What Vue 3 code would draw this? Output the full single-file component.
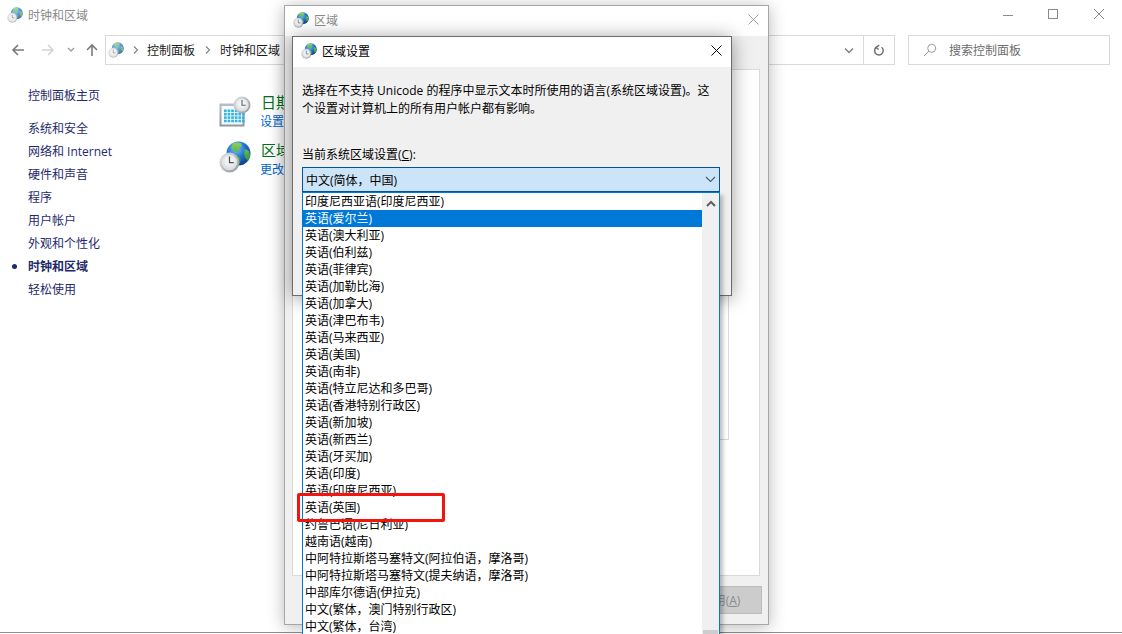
<script setup>
const sideItems = [
  { label: '系统和安全' },
  { label: '网络和 Internet' },
  { label: '硬件和声音' },
  { label: '程序' },
  { label: '用户帐户' },
  { label: '外观和个性化' },
  { label: '时钟和区域', active: true },
  { label: '轻松使用' }
]
const locales = [
  '印度尼西亚语(印度尼西亚)', '英语(爱尔兰)', '英语(澳大利亚)', '英语(伯利兹)', '英语(菲律宾)',
  '英语(加勒比海)', '英语(加拿大)', '英语(津巴布韦)', '英语(马来西亚)', '英语(美国)', '英语(南非)',
  '英语(特立尼达和多巴哥)', '英语(香港特别行政区)', '英语(新加坡)', '英语(新西兰)', '英语(牙买加)',
  '英语(印度)', '英语(印度尼西亚)', '英语(英国)', '约鲁巴语(尼日利亚)', '越南语(越南)',
  '中阿特拉斯塔马塞特文(阿拉伯语，摩洛哥)', '中阿特拉斯塔马塞特文(提夫纳语，摩洛哥)',
  '中部库尔德语(伊拉克)', '中文(繁体，澳门特别行政区)', '中文(繁体，台湾)'
]
const calCells = []
for (let r = 0; r < 4; r++) for (let c = 0; c < 6; c++) calCells.push({ x: 5 + c * 3.6, y: 13.5 + r * 3.4 })
</script>

<template>
  <div class="page">
    <svg class="defs" aria-hidden="true">
      <defs>
        <radialGradient id="sea" cx="0.4" cy="0.3" r="0.8">
          <stop offset="0" stop-color="#7cc4f5" />
          <stop offset="0.5" stop-color="#1c6fd0" />
          <stop offset="1" stop-color="#0b2f86" />
        </radialGradient>
        <linearGradient id="land" x1="0" y1="0" x2="0" y2="1">
          <stop offset="0" stop-color="#8bd45a" />
          <stop offset="1" stop-color="#1f8a36" />
        </linearGradient>
        <linearGradient id="silver" x1="0" y1="0" x2="1" y2="1">
          <stop offset="0" stop-color="#e6e8ea" />
          <stop offset="1" stop-color="#8d9398" />
        </linearGradient>
        <radialGradient id="face" cx="0.5" cy="0.4" r="0.7">
          <stop offset="0" stop-color="#ffffff" />
          <stop offset="1" stop-color="#cfd4d8" />
        </radialGradient>
        <linearGradient id="sheet" x1="0" y1="0" x2="0" y2="1">
          <stop offset="0" stop-color="#b9c0c4" />
          <stop offset="1" stop-color="#8f969a" />
        </linearGradient>
        <symbol id="globe-clock" viewBox="0 0 32 32">
          <circle cx="19.5" cy="12.5" r="12" fill="url(#sea)" />
          <path d="M14 2.2c3-1 6-1 8 0l1 3-3 2-1 4-4-1-3-4zM26 8l4 2 1 5-2 5-3-3-1-5zM17 15l4 1 1 3-2 4-3-3z" fill="url(#land)" />
          <circle cx="10.5" cy="21.5" r="10" fill="url(#silver)" />
          <circle cx="10.5" cy="21.5" r="7.8" fill="url(#face)" />
          <path d="M10.5 15.5v6.2h4.2" fill="none" stroke="#4b5258" stroke-width="1.3" />
        </symbol>
        <symbol id="calendar-clock" viewBox="0 0 32 32">
          <rect x="0.5" y="7.5" width="25" height="23" fill="url(#sheet)" />
          <rect x="2.5" y="10" width="21" height="18.5" fill="#f5fafc" />
          <rect v-for="(cell, i) in calCells" :key="i" :x="cell.x" :y="cell.y" width="2.7" height="2.6" fill="#39b4dc" />
          <circle cx="23" cy="9" r="8.5" fill="url(#silver)" />
          <circle cx="23" cy="9" r="6.6" fill="url(#face)" />
          <path d="M23 4v5.2h3.6" fill="none" stroke="#5a6066" stroke-width="1.1" />
        </symbol>
      </defs>
    </svg>

    <header class="titlebar">
      <svg class="ico16 faded"><use href="#globe-clock" /></svg>
      <span class="title-text">时钟和区域</span>
      <div class="win-ctrls">
        <svg class="ctrl min" width="10" height="10" viewBox="0 0 10 10"><path d="M0 5.5h10" stroke="#8a8a8a" fill="none" /></svg>
        <svg class="ctrl max" width="10" height="10" viewBox="0 0 10 10"><rect x="0.5" y="0.5" width="9" height="9" stroke="#8a8a8a" fill="none" /></svg>
        <svg class="ctrl close" width="10" height="10" viewBox="0 0 10 10"><path d="M0 0l10 10M10 0L0 10" stroke="#8a8a8a" fill="none" /></svg>
      </div>
    </header>

    <nav class="navbar">
      <div class="nav-btns">
        <svg width="14" height="14" viewBox="0 0 14 14"><path d="M13 7H2M7 2L2 7l5 5" fill="none" stroke="#7a7a7a" stroke-width="1.6" /></svg>
        <svg class="fwd" width="14" height="14" viewBox="0 0 14 14"><path d="M1 7h11M7 2l5 5-5 5" fill="none" stroke="#d4d4d4" stroke-width="1.6" /></svg>
        <svg class="drop" width="8" height="6" viewBox="0 0 8 6"><path d="M1 1l3 3 3-3" fill="none" stroke="#9a9a9a" stroke-width="1.3" /></svg>
        <svg class="up" width="14" height="14" viewBox="0 0 14 14"><path d="M7 13V2M2 7l5-5 5 5" fill="none" stroke="#7a7a7a" stroke-width="1.6" /></svg>
      </div>
      <div class="address">
        <svg class="ico16 faded addr-ico"><use href="#globe-clock" /></svg>
        <svg class="crumb-sep first" width="6" height="8" viewBox="0 0 6 8"><path d="M1 0.5L4.5 4 1 7.5" fill="none" stroke="#8a8a8a" stroke-width="1.3" /></svg>
        <span class="crumb">控制面板</span>
        <svg class="crumb-sep" width="6" height="8" viewBox="0 0 6 8"><path d="M1 0.5L4.5 4 1 7.5" fill="none" stroke="#8a8a8a" stroke-width="1.3" /></svg>
        <span class="crumb">时钟和区域</span>
        <svg class="addr-drop" width="10" height="7" viewBox="0 0 10 7"><path d="M1 1.5l4 4 4-4" fill="none" stroke="#808080" stroke-width="1.5" /></svg>
        <div class="refresh">
          <svg width="12" height="13" viewBox="0 0 14 14"><path d="M3.6 3.4A5 5 0 1 0 10 3.2M7.2 0.8L3.4 3.4l3.2 2.4" fill="none" stroke="#6f6f6f" stroke-width="1.7" /></svg>
        </div>
      </div>
      <div class="search">
        <svg width="14" height="14" viewBox="0 0 14 14"><circle cx="8.7" cy="5.3" r="4" fill="none" stroke="#9a9a9a" /><path d="M5.8 8.2L1 13" stroke="#9a9a9a" fill="none" /></svg>
        <span>搜索控制面板</span>
      </div>
    </nav>

    <div class="content">
      <aside class="sidebar">
        <div class="side-home">控制面板主页</div>
        <div v-for="item in sideItems" :key="item.label" class="side-item" :class="{ active: item.active }">{{ item.label }}</div>
      </aside>
      <main class="categories">
        <section class="cat">
          <svg class="cat-ico"><use href="#calendar-clock" /></svg>
          <div class="cat-text">
            <div class="cat-head">日期和时间</div>
            <div class="cat-link">设置时间和日期</div>
          </div>
        </section>
        <section class="cat second">
          <svg class="cat-ico"><use href="#globe-clock" /></svg>
          <div class="cat-text">
            <div class="cat-head">区域</div>
            <div class="cat-link">更改位置</div>
          </div>
        </section>
      </main>
    </div>

    <div class="window-bottom"></div>

    <div class="dialog region">
      <div class="dlg-title">
        <svg class="ico16"><use href="#globe-clock" /></svg>
        <span class="dim">区域</span>
        <svg class="dlg-x" width="11" height="11" viewBox="0 0 11 11"><path d="M0.5 0.5l10 10M10.5 0.5l-10 10" stroke="#a0a0a0" fill="none" /></svg>
      </div>
      <div class="region-body">
        <div class="tab-panel">
          <div class="group-box"></div>
        </div>
        <div class="region-foot">
          <button class="apply" disabled>应用(<u>A</u>)</button>
        </div>
      </div>

      <div class="dialog locale">
        <div class="dlg-title inner">
          <svg class="ico16"><use href="#globe-clock" /></svg>
          <span>区域设置</span>
          <svg class="dlg-x" width="11" height="11" viewBox="0 0 11 11"><path d="M0.5 0.5l10 10M10.5 0.5l-10 10" stroke="#000" fill="none" /></svg>
        </div>
        <div class="locale-body">
          <p class="desc">选择在不支持 Unicode 的程序中显示文本时所使用的语言(系统区域设置)。这<br />个设置对计算机上的所有用户帐户都有影响。</p>
          <label class="combo-label">当前系统区域设置(<u>C</u>):</label>
          <div class="combo-wrap">
            <div class="combo">
              <span>中文(简体，中国)</span>
              <svg width="11" height="7" viewBox="0 0 11 7"><path d="M1 1l4.5 4.5L10 1" fill="none" stroke="#4a5a68" stroke-width="1.1" /></svg>
            </div>
            <div class="dropdown">
              <ul class="options">
                <li v-for="(name, i) in locales" :key="name" :class="{ selected: i === 1 }">{{ name }}</li>
              </ul>
              <div class="scrollbar">
                <svg width="10" height="7" viewBox="0 0 10 7"><path d="M1 6l4-4 4 4" fill="none" stroke="#606060" stroke-width="2" /></svg>
                <div class="thumb"></div>
              </div>
            </div>
          </div>
        </div>
      </div>
    </div>

    <div class="highlight"></div>
  </div>
</template>

<style>
html, body { margin: 0; background: #fff; }
</style>

<style scoped>
.page {
  position: relative;
  width: 1122px;
  height: 634px;
  overflow: hidden;
  background: #fff;
  font-family: "Open Sans", "Noto Sans CJK SC", sans-serif;
  font-size: 12px;
  color: #000;
}
.defs { display: block; width: 0; height: 0; }
.ico16 { width: 16px; height: 16px; flex: none; }
.faded { opacity: 0.75; }
.titlebar {
  height: 30px;
  display: flex;
  align-items: center;
  padding-left: 7px;
}
.title-text { margin-left: 5px; color: #8a8a8a; }
.win-ctrls { margin-left: auto; display: flex; align-items: center; }
.ctrl.max { margin-left: 35px; margin-top: -2px; }
.ctrl.close { margin-left: 36px; margin-right: 18px; margin-top: -2px; }
.navbar {
  height: 30px;
  margin-top: 5px;
  display: flex;
  align-items: stretch;
}
.nav-btns {
  width: 105px;
  flex: none;
  display: flex;
  align-items: center;
  padding-left: 11px;
  box-sizing: border-box;
}
.fwd { margin-left: 16px; }
.drop { margin-left: 12px; }
.up { margin-left: 10px; }
.address {
  width: 790px;
  flex: none;
  box-sizing: border-box;
  border: 1px solid #d9d9d9;
  display: flex;
  align-items: center;
  padding-left: 2px;
}
.addr-ico { margin-right: 9px; }
.crumb-sep { margin-right: 9px; }
.crumb-sep.first { margin-right: 8px; }
.crumb { margin-right: 9px; color: #1a1a1a; }
.crumb:nth-of-type(1) { margin-right: 10px; }
.addr-drop { margin-left: auto; margin-right: 9px; }
.refresh {
  width: 30px;
  height: 100%;
  border-left: 1px solid #d9d9d9;
  display: flex;
  align-items: center;
  justify-content: center;
}
.search {
  width: 202px;
  flex: none;
  margin-left: 13px;
  box-sizing: border-box;
  border: 1px solid #d9d9d9;
  display: flex;
  align-items: center;
  padding-left: 14px;
  color: #6d6d6d;
}
.search span { margin-left: 12px; }
.content { display: flex; }
.sidebar {
  width: 219px;
  flex: none;
  box-sizing: border-box;
  padding: 19px 0 0 28px;
  color: #1e2a6b;
}
.side-home { line-height: 23px; margin-bottom: 10px; }
.side-item { line-height: 23px; position: relative; }
.side-item.active { font-weight: 700; }
.side-item.active::before {
  content: "";
  position: absolute;
  left: -16px;
  top: 9px;
  width: 5px;
  height: 5px;
  border-radius: 50%;
  background: #1e2a6b;
}
.categories { padding-top: 31px; flex: 1; }
.cat { display: flex; align-items: flex-start; }
.cat.second { margin-top: 10px; }
.cat-ico { width: 32px; height: 32px; flex: none; }
.cat-text { margin-left: 10px; margin-top: -3px; width: 23px; overflow: hidden; }
.cat.second .cat-text { margin-top: 0; }
.cat-head { font-size: 15px; line-height: 19px; color: #00701a; white-space: nowrap; }
.cat-link { line-height: 19px; color: #0066cc; white-space: nowrap; margin-left: -1px; }

.window-bottom {
  position: absolute;
  left: 0;
  right: 0;
  top: 632px;
  height: 1px;
  background: #8f8f8f;
}

.dialog {
  position: absolute;
  box-sizing: border-box;
  background: #f0f0f0;
  display: flex;
  flex-direction: column;
}
.region {
  left: 284px;
  top: 5px;
  width: 485px;
  height: 620px;
  border: 1px solid #a6a6a6;
  box-shadow: 0 2px 16px rgba(0, 0, 0, 0.28);
}
.dlg-title {
  background: #fff;
  height: 30px;
  flex: none;
  box-sizing: border-box;
  padding: 0 0 2px 8px;
  display: flex;
  align-items: center;
  position: relative;
}
.dlg-title span { margin-left: 5px; }
.dim { color: #8a8a8a; }
.dlg-x { position: absolute; right: 9px; top: 8px; }
.region-body {
  flex: 1;
  display: flex;
  flex-direction: column;
  padding: 33px 8px 9px 7px;
  min-height: 0;
}
.tab-panel {
  height: 507px;
  flex: none;
  box-sizing: border-box;
  background: #fff;
  border: 1px solid #d9d9d9;
  padding: 130px 30px 0 10px;
}
.group-box {
  height: 238px;
  border: 1px solid #d9d9d9;
}
.region-foot {
  display: flex;
  justify-content: flex-end;
  margin-top: 10px;
  margin-right: -2px;
}
.apply {
  width: 82px;
  height: 28px;
  box-sizing: border-box;
  border: 1px solid #bdbdbd;
  background: #cccccc;
  color: #8a8a8a;
  font: inherit;
  padding: 0;
}
.locale {
  left: 7px;
  top: 30px;
  width: 440px;
  height: 260px;
  border: 1px solid #6b6b6b;
  box-shadow: 0 2px 18px rgba(0, 0, 0, 0.4);
}
.locale-body { padding: 0 10px 0 9px; flex: 1; }
.desc { margin: 15px 0 0; line-height: 18px; color: #000; }
.combo-label { display: block; margin-top: 28px; line-height: 18px; color: #000; }
.combo-wrap { position: relative; margin-top: 3px; width: 418px; }
.combo {
  height: 25px;
  box-sizing: border-box;
  background: #cce4f7;
  border: 1px solid #005499;
  display: flex;
  align-items: center;
  justify-content: space-between;
  padding: 0 3px;
  color: #000;
}
.dropdown {
  position: absolute;
  left: 0;
  top: 25px;
  width: 418px;
  height: 460px;
  box-sizing: border-box;
  background: #fff;
  border: 1px solid #0078d7;
  display: flex;
  box-shadow: 3px 3px 4px rgba(0, 0, 0, 0.25);
}
.options { list-style: none; margin: 0; padding: 0; flex: 1; min-width: 0; }
.options li {
  height: 17px;
  line-height: 17px;
  padding-left: 2px;
  white-space: nowrap;
  color: #000;
}
.options li.selected { background: #0078d7; color: #fff; }
.scrollbar {
  width: 17px;
  flex: none;
  background: #f0f0f0;
  display: flex;
  flex-direction: column;
  align-items: center;
  padding-top: 7px;
  box-sizing: border-box;
}
.thumb { width: 15px; height: 4px; background: #cdcdcd; margin-top: 423px; }
.highlight {
  position: absolute;
  left: 297px;
  top: 493px;
  width: 148px;
  height: 29px;
  box-sizing: border-box;
  border: 3px solid #f5130d;
  border-radius: 2px;
}
</style>
